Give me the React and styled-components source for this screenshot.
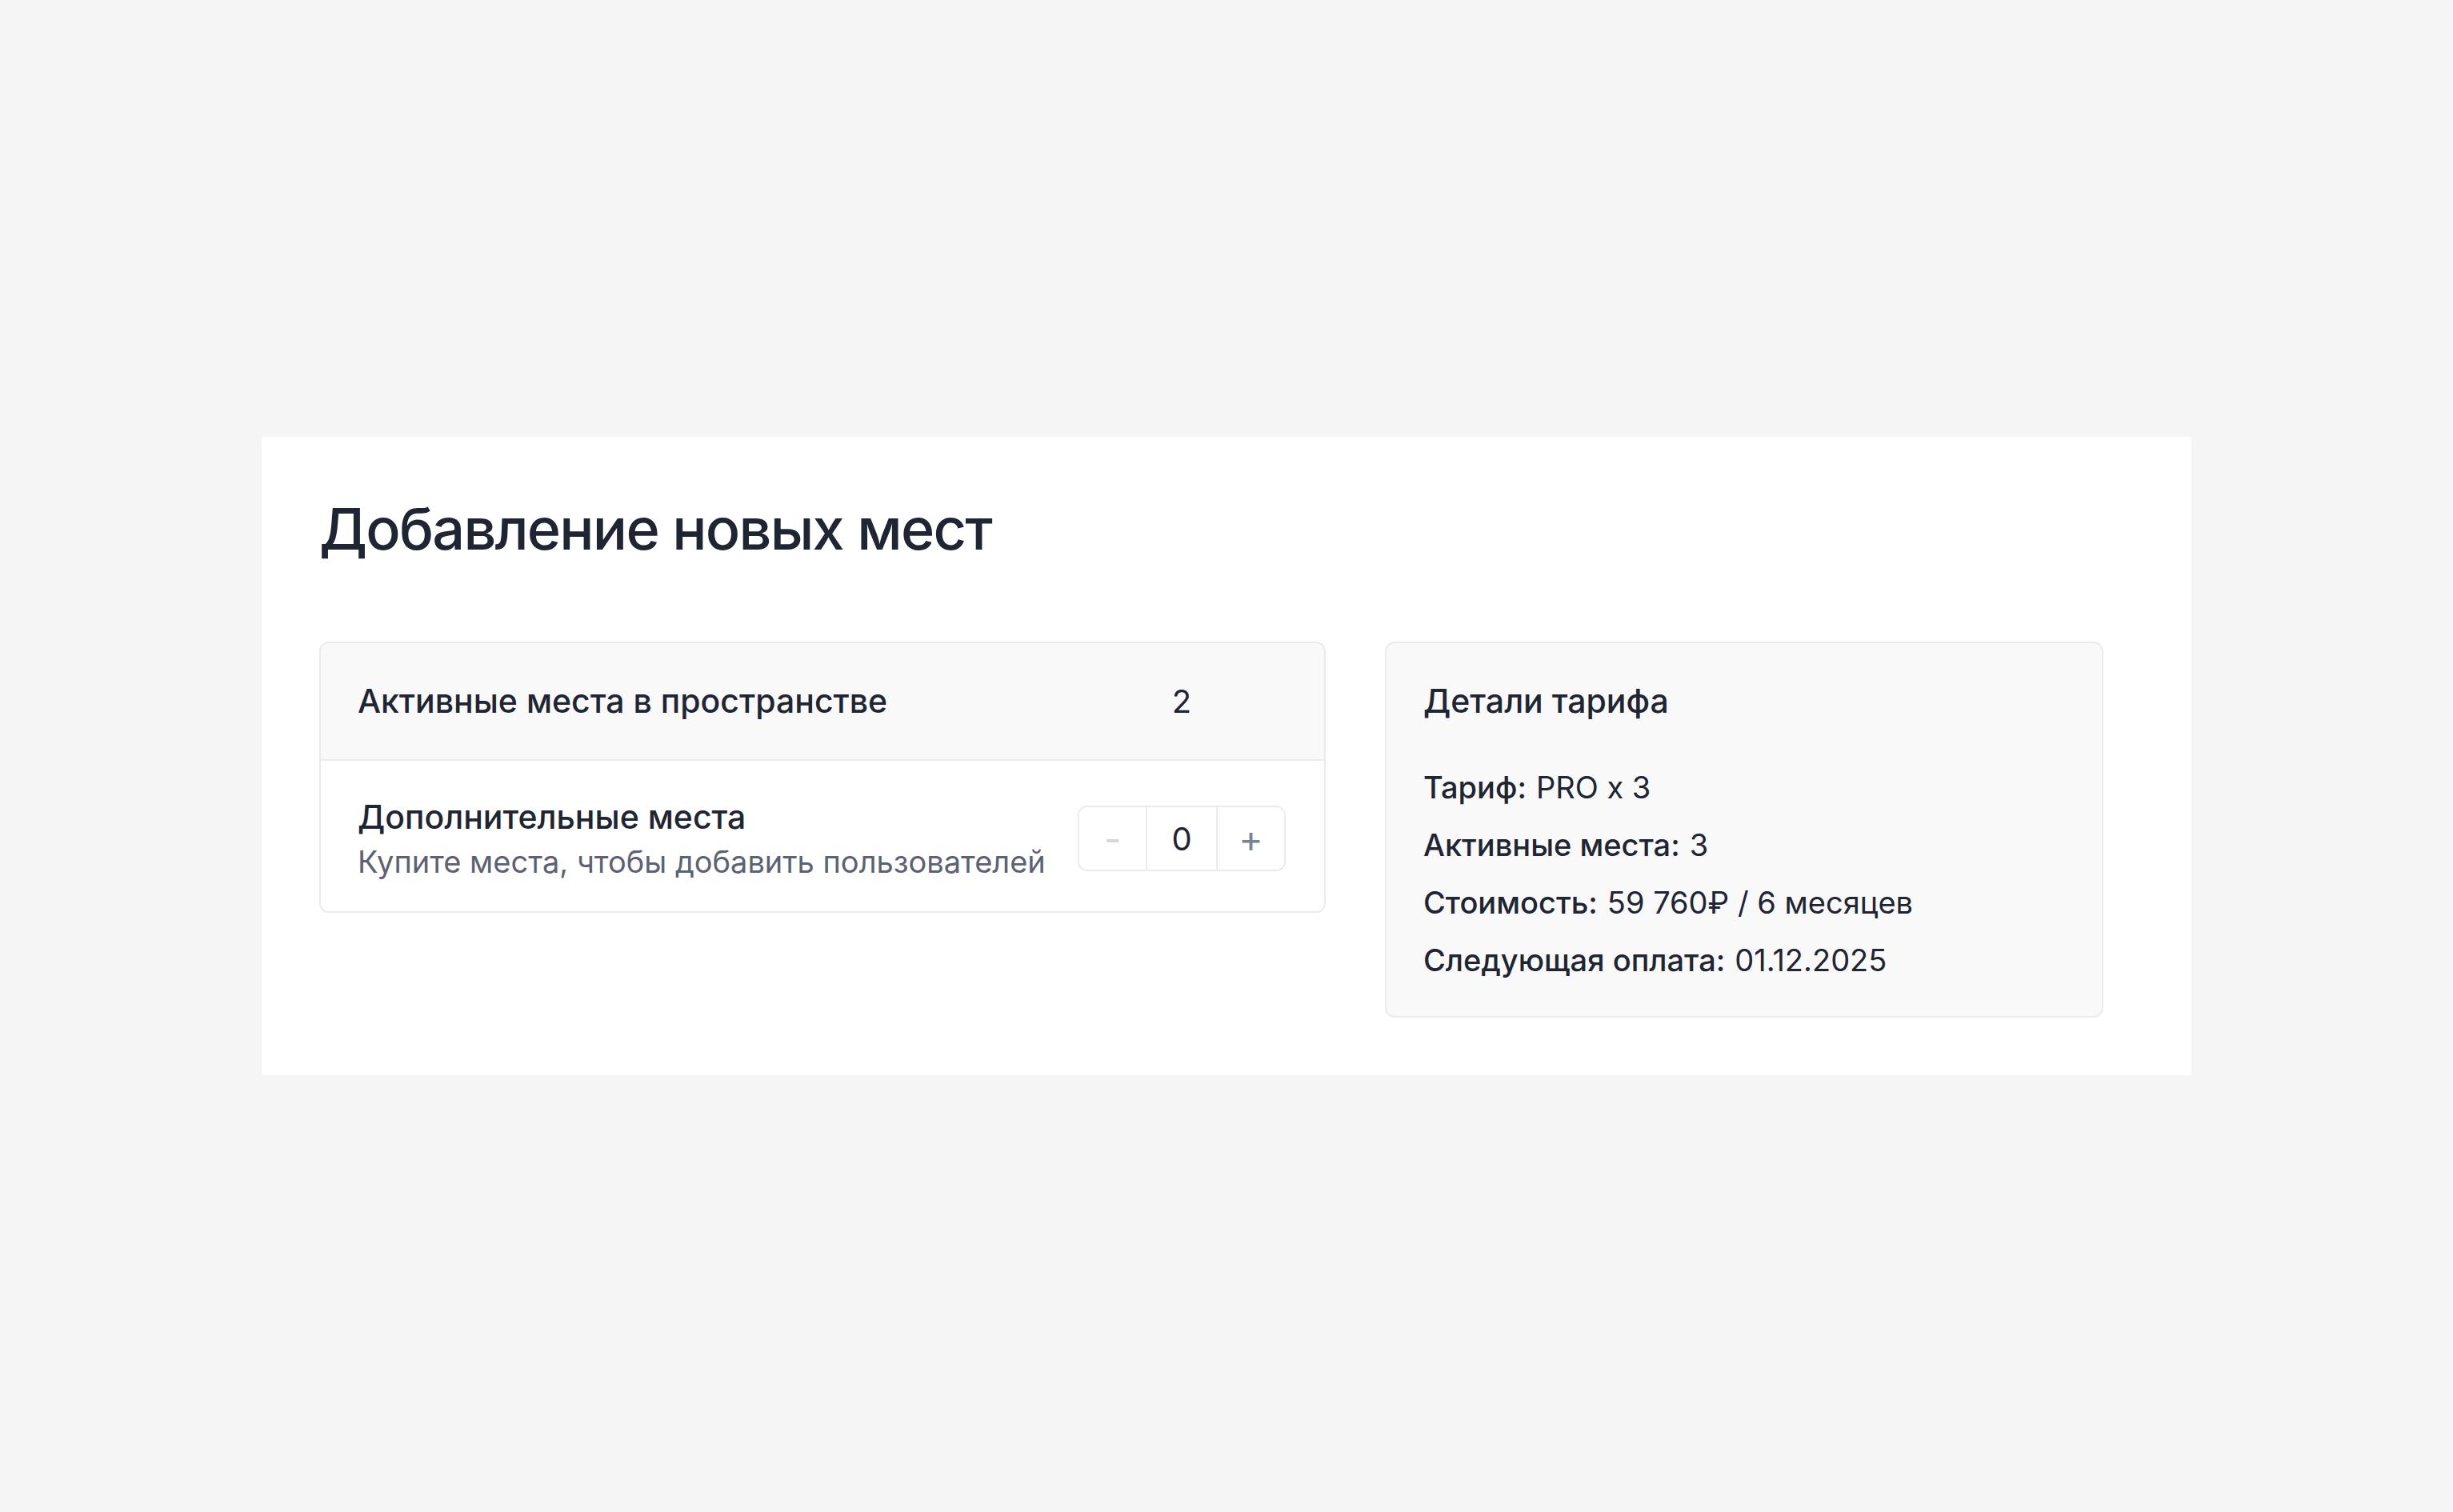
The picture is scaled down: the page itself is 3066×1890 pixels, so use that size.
import React, { useState } from "react";
import styled, { createGlobalStyle } from "styled-components";

const GlobalStyle = createGlobalStyle`
  * { box-sizing: border-box; }
  html, body { margin: 0; padding: 0; }
  body {
    background: #f5f5f5;
    font-family: Inter, "Noto Sans", "Liberation Sans", sans-serif;
    color: #1f2533;
  }
`;

const Page = styled.div`
  min-height: 100vh;
  display: flex;
  align-items: center;
  justify-content: center;
`;

const Panel = styled.section`
  width: 2412px;
  background: #ffffff;
  padding: 72px;
`;

const Title = styled.h1`
  margin: 0 0 98px;
  font-size: 72px;
  line-height: 86px;
  font-weight: 500;
  letter-spacing: -0.025em;
  color: #1f2533;
`;

const Columns = styled.div`
  display: grid;
  grid-template-columns: 1258px 898px;
  column-gap: 74px;
  align-items: start;
`;

const Box = styled.div`
  border: 2px solid #ebebeb;
  border-radius: 12px;
  background: ${(p) => (p.$muted ? "#f9f9f9" : "#ffffff")};
  overflow: hidden;
`;

const Row = styled.div`
  display: grid;
  grid-template-columns: 1fr 260px;
  column-gap: 32px;
  align-items: center;
  padding: ${(p) => (p.$head ? "48px 48px 48px 46px" : "44px 48px 38px 46px")};
  background: ${(p) => (p.$head ? "#f9f9f9" : "#ffffff")};
  & + & {
    border-top: 2px solid #ebebeb;
  }
`;

const Label = styled.div`
  font-size: 41px;
  line-height: ${(p) => (p.$stacked ? "52px" : "49px")};
  margin-bottom: ${(p) => (p.$stacked ? "6px" : "0")};
  font-weight: 500;
  color: #1f2533;
`;

const Hint = styled.div`
  font-size: 38px;
  line-height: 48px;
  color: #5c6274;
`;

const Value = styled.div`
  text-align: center;
  font-size: 40px;
  line-height: 49px;
  color: #1f2533;
`;

const Stepper = styled.div`
  display: flex;
  height: 82px;
  border: 2px solid #ebebeb;
  border-radius: 12px;
  overflow: hidden;
`;

const StepButton = styled.button`
  width: 83px;
  border: none;
  background: #ffffff;
  font-family: inherit;
  font-size: 46px;
  line-height: 1;
  color: ${(p) => (p.disabled ? "#d3d6dd" : "#7b8198")};
  cursor: ${(p) => (p.disabled ? "default" : "pointer")};
  padding: 0;
`;

const Count = styled.div`
  flex: 1;
  display: flex;
  align-items: center;
  justify-content: center;
  border-left: 2px solid #ebebeb;
  border-right: 2px solid #ebebeb;
  font-size: 40px;
  color: #1f2533;
`;

const Details = styled.div`
  padding: 48px 48px 46px 46px;
`;

const DetailsTitle = styled.div`
  font-size: 41px;
  line-height: 49px;
  font-weight: 500;
  margin-bottom: 59px;
`;

const List = styled.div`
  display: flex;
  flex-direction: column;
  gap: 24px;
`;

const Item = styled.div`
  display: flex;
  gap: 12px;
  font-size: 38px;
  line-height: 48px;
  color: #1f2533;
  b {
    font-weight: 500;
  }
`;

const details = [
  ["Тариф:", "PRO x 3"],
  ["Активные места:", "3"],
  ["Стоимость:", "59 760₽ / 6 месяцев"],
  ["Следующая оплата:", "01.12.2025"],
];

export default function App() {
  const [extra, setExtra] = useState(0);
  return (
    <>
      <GlobalStyle />
      <Page>
        <Panel>
          <Title>Добавление новых мест</Title>
          <Columns>
            <Box>
              <Row $head>
                <Label>Активные места в пространстве</Label>
                <Value>2</Value>
              </Row>
              <Row>
                <div>
                  <Label $stacked>Дополнительные места</Label>
                  <Hint>Купите места, чтобы добавить пользователей</Hint>
                </div>
                <Stepper>
                  <StepButton
                    disabled={extra === 0}
                    onClick={() => setExtra((v) => Math.max(0, v - 1))}
                  >
                    -
                  </StepButton>
                  <Count>{extra}</Count>
                  <StepButton onClick={() => setExtra((v) => v + 1)}>+</StepButton>
                </Stepper>
              </Row>
            </Box>
            <Box $muted>
              <Details>
                <DetailsTitle>Детали тарифа</DetailsTitle>
                <List>
                  {details.map(([k, v]) => (
                    <Item key={k}>
                      <b>{k}</b>
                      <span>{v}</span>
                    </Item>
                  ))}
                </List>
              </Details>
            </Box>
          </Columns>
        </Panel>
      </Page>
    </>
  );
}
